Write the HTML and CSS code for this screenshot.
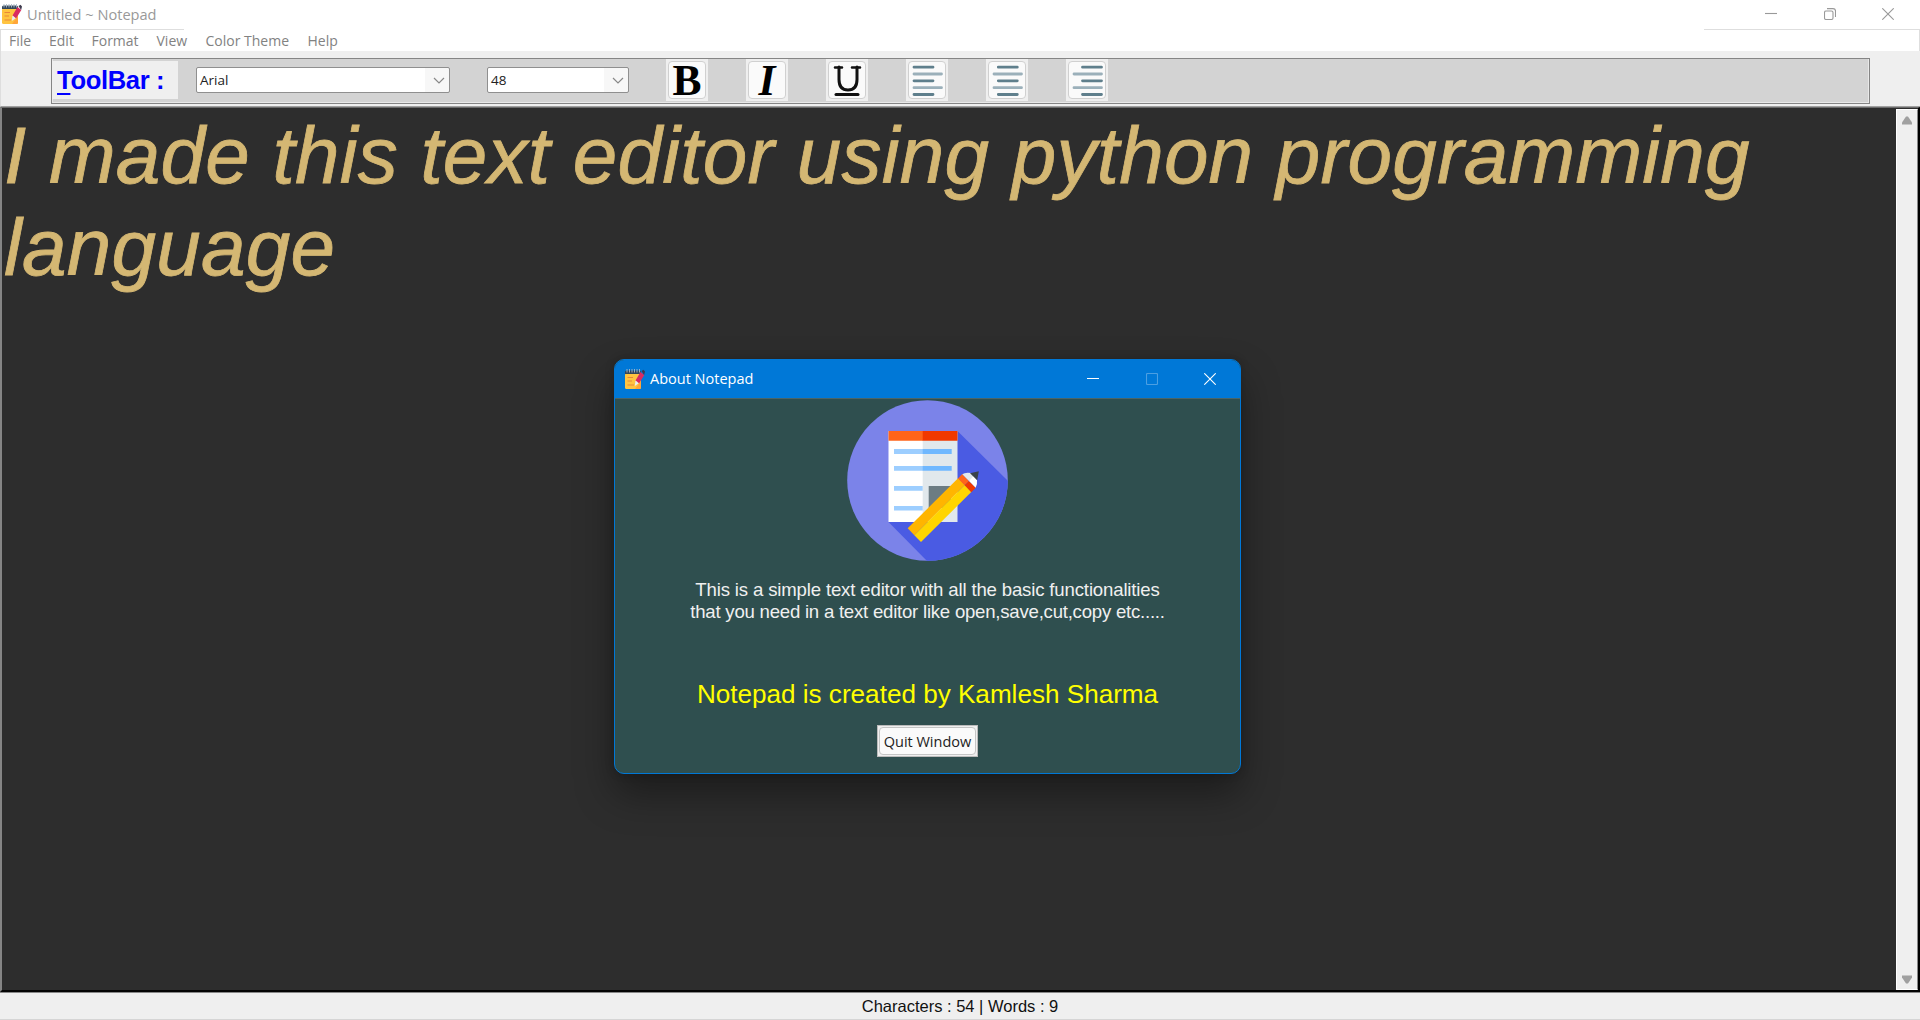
FILE: index.html
```html
<!DOCTYPE html>
<html lang="en">
<head>
<meta charset="utf-8">
<title>Untitled ~ Notepad</title>
<link rel="stylesheet" href="styles.css">
</head>
<body>
<svg class="defs" width="0" height="0">
  <symbol id="app" viewBox="0 0 20 20">
    <rect x="0" y="4" width="16" height="16" rx="1.6" fill="#ffc440"/>
    <path d="M10 20L16 12V18.500Q16 20 14.500 20Z" fill="#ffa53a"/>
    <path d="M0 5V3Q0 1.500 1.500 1.500H14.500Q16 1.500 16 3V5Z" fill="#33475b"/>
    <path d="M2 0V3.500M4.500 0V3.500M7 0V3.500M9.500 0V3.500M12 0V3.500M14.500 0V3.500" stroke="#aab9c6" stroke-width=".9"/>
    <path d="M2.500 8.500H8M2.500 12H7M2.500 16H9" stroke="#e8873a" stroke-width="1"/>
    <path d="M15.500 3L19.300 6L14 14.500L10.500 11.500Z" fill="#d92b62"/>
    <path d="M16.500 2L18.500 .8L20 2.500L19.100 6Z" fill="#3d3a4d"/>
    <path d="M10.500 11.500L13.800 14.300L9.800 17Z" fill="#e6edf4"/>
  </symbol>
</svg>
<div class="window">
  <header class="titlebar">
    <svg class="app-icon" width="20" height="20"><use href="#app"/></svg>
    <span class="title">Untitled ~ Notepad</span>
    <div class="controls">
      <svg width="12" height="12"><path d="M0 5.500H12"/></svg>
      <svg width="12" height="12"><rect x=".5" y="3" width="8.500" height="8.500" rx="1.500"/><path d="M3 .6H9Q11.500 .6 11.500 3V9"/></svg>
      <svg width="12" height="12"><path d="M.3 .3L11.700 11.700M11.700 .3L.3 11.700"/></svg>
    </div>
  </header>
  <nav class="menu">
    <span class="m-file">File</span><span class="m-edit">Edit</span><span class="m-format">Format</span><span class="m-view">View</span><span class="m-theme">Color Theme</span><span class="m-help">Help</span>
  </nav>
  <div class="toolrow">
    <div class="toolbar">
      <div class="label"><span class="mnemonic">T</span>oolBar :</div>
      <div class="combo font"><span>Arial</span><svg width="12" height="7"><path d="M1 1L6 6L11 1"/></svg></div>
      <div class="combo size"><span>48</span><svg width="12" height="7"><path d="M1 1L6 6L11 1"/></svg></div>
      <div class="tools">
        <button class="tool"><span class="bold">B</span></button>
        <button class="tool"><span class="italic">I</span></button>
        <button class="tool"><svg class="underline" width="38" height="38"><path d="M6 5.500H13M23 5.500H31" stroke-width="2.600"/><path d="M10 5V17.500Q10 28 19 28T28 17.500V5" stroke-width="3"/><path d="M7 32.500H29" stroke-width="3"/></svg></button>
        <button class="tool"><svg class="align" width="38" height="38"><path class="s" d="M5 5.200H24M5 18.800H24M5 32.500H24"/><path class="l" d="M5 12H32.500M5 25.700H32.500"/></svg></button>
        <button class="tool"><svg class="align" width="38" height="38"><path class="s" d="M9.300 5.200H28.300M9.300 18.800H28.300M9.300 32.500H28.300"/><path class="l" d="M5 12H32.500M5 25.700H32.500"/></svg></button>
        <button class="tool"><svg class="align" width="38" height="38"><path class="s" d="M13.500 5.200H32.500M13.500 18.800H32.500M13.500 32.500H32.500"/><path class="l" d="M5 12H32.500M5 25.700H32.500"/></svg></button>
      </div>
    </div>
  </div>
  <main class="editor">
    <div class="text">I made this text editor using python programming<br>language</div>
    <div class="scroll">
      <svg width="12" height="9"><path d="M5 .5H7L11 6.500V8.500H1V6.500Z"/></svg>
      <svg width="12" height="9"><path d="M1 .5H11V2.500L7 8.500H5L1 2.500Z"/></svg>
    </div>
  </main>
  <footer class="status">Characters : 54 | Words : 9</footer>
</div>
<section class="dialog">
  <header class="dialog-title">
    <svg class="app-icon" width="20" height="20"><use href="#app"/></svg>
    <span class="title">About Notepad</span>
    <div class="controls">
      <svg width="12" height="12"><path d="M0 5.500H12"/></svg>
      <svg class="disabled" width="12" height="12"><rect x=".5" y=".5" width="11" height="11" rx="1"/></svg>
      <svg width="12" height="12"><path d="M.3 .3L11.700 11.700M11.700 .3L.3 11.700"/></svg>
    </div>
  </header>
  <div class="dialog-body">
    <svg class="logo" width="161" height="161" viewBox="847 400 161 161">
      <defs><clipPath id="disc"><circle cx="927.500" cy="480.500" r="80.300"/></clipPath></defs>
      <circle cx="927.500" cy="480.500" r="80.300" fill="#7b83e9"/>
      <path clip-path="url(#disc)" d="M957.500 431L1012 485V565H931L888.500 522Z" fill="#4a5be3"/>
      <path fill="#fff" d="M888.500 431H923V522H888.500Z"/><path fill="#e1e8ec" d="M922.700 431H957.500V522H922.700Z"/>
      <path fill="#ff641a" d="M888.500 431H923V440.800H888.500Z"/><path fill="#f13800" d="M922.700 431H957.500V440.800H922.700Z"/>
      <path fill="#9dceff" d="M894 449H923V454H894ZM894 466H923V470.700H894ZM894 486H922.700V490.700H894ZM894 506H922.700V510.500H894Z"/>
      <path fill="#70b8ff" d="M922.700 449H951.700V454H922.700ZM922.700 466H951.700V470.700H922.700Z"/>
      <path fill="#6c7c83" d="M928.700 486H951V508H928.700Z"/>
      <path fill="#ffb500" d="M907.700 528.300L958.300 478L964.700 485L914.300 535.300Z"/>
      <path fill="#ffd500" d="M914.300 535.300L964.700 485L971.300 492L921 542Z"/>
      <path fill="#ff641a" d="M958 478.500L962.300 474L969 481L964.700 485.300Z"/>
      <path fill="#f13800" d="M964.700 485.300L969 481L975.700 487.700L971.300 492.200Z"/>
      <path fill="#e1e8ec" d="M962.300 474.300Q965 472 971 473L976 477L969 481Z"/><path fill="#fff" d="M969 481L974 475.500L977 480Q977.500 484 975.700 487.700Z"/>
      <path fill="#394249" d="M970 473.200L978.800 471.200L977.200 480.200Z"/>
    </svg>
    <p class="about"><span class="line-one">This is a simple text editor with all the basic functionalities</span><br><span class="line-two">that you need in a text editor like open,save,cut,copy etc.....</span></p>
    <p class="credit">Notepad is created by Kamlesh Sharma</p>
    <button class="quit"><span>Quit Window</span></button>
  </div>
</section>
</body>
</html>
```
FILE: styles.css
```css
* { box-sizing: border-box; }
body { margin: 0; width: 1920px; height: 1020px; overflow: hidden; font-family: "Open Sans", "Noto Sans", sans-serif; background: #fff; }
button { font: inherit; border: 0; padding: 0; }
.defs { position: absolute; }
.window { display: flex; flex-direction: column; height: 1020px; }
.titlebar {
  height: 30px; display: flex; align-items: center; padding: 0 26px 2px 2px; color: #999; font-size: 14.600px;
  background: linear-gradient(#dedede, #dedede) 0 29px / 184px 1px no-repeat, linear-gradient(#dedede, #dedede) 1704px 29px / 216px 1px no-repeat;
}
.title { margin-left: 5px; white-space: nowrap; }
.controls { margin-left: auto; display: flex; gap: 46.500px; }
.controls svg { fill: none; stroke: #999; stroke-width: 1.100; }
.menu { height: 21px; display: flex; padding-left: 8px; color: #828282; font-size: 14px; line-height: 22px; white-space: nowrap; border-left: 1px solid #dedede; border-right: 1px solid #dedede; }
.m-file { width: 40px; }
.m-edit { width: 42.500px; }
.m-format { width: 65px; }
.m-view { width: 49px; }
.m-theme { width: 102px; }
.toolrow { height: 56px; background: #efefef; padding: 7px 50px 2px; border-bottom: 1px solid #a0a0a0; border-left: 1px solid #dedede; }
.toolbar { height: 46px; background: #d3d3d3; border: 1px solid #858585; box-shadow: inset 1px 0 #e8e8e8, inset -1px -1px #e8e8e8; display: flex; align-items: center; padding: 0 1px 2px 0; }
.label { width: 126px; height: 38px; background: #efefef; color: #00f; font: bold 25.600px/38px "Liberation Sans", sans-serif; letter-spacing: -.35px; padding-left: 5px; white-space: nowrap; }
.mnemonic { text-decoration: underline; text-decoration-thickness: 2px; text-underline-offset: 4px; }
.combo { height: 26px; border: 1px solid #8f8f8f; border-radius: 2px; background: linear-gradient(90deg, #fff calc(100% - 24px), #f7f7f7 0); display: flex; align-items: center; justify-content: space-between; padding: 0 4px 0 3px; font-size: 13.500px; color: #222; }
.combo svg { fill: none; stroke: #888; stroke-width: 1.200; }
.font { width: 254px; margin-left: 18px; }
.size { width: 142px; margin-left: 37px; }
.tools { display: flex; gap: 38px; margin-left: 37px; }
.tool { width: 42px; height: 42px; background: #efefef; padding: 2px; display: flex; }
.tool > * { display: block; width: 38px; height: 38px; background: #fafafa; border: 1px solid #d0d0d0; border-radius: 4px; }
.bold, .italic { font: bold 43.500px/36px "Liberation Serif", serif; color: #000; text-align: center; }
.italic { font-style: italic; }
.underline { fill: none; stroke: #111; stroke-linecap: round; }
.align { fill: none; stroke-width: 2.800; stroke-linecap: round; }
.s { stroke: #5f7f8c; }
.l { stroke: #9bb0ba; }
.editor { flex: 1; background: #2d2d2d; border: 1px solid #000; border-width: 1px 2px 2px 2px; border-color: #6b6b6b #000 #050505 #858585; display: flex; justify-content: space-between; padding: 1px 0 0; }
.text { font: italic 80px/92px "Liberation Sans", sans-serif; letter-spacing: .24px; -webkit-text-stroke: .8px #d4b773; color: #d4b773; padding: 1px 0 0 2px; white-space: nowrap; }
.scroll { width: 22px; background: #efefef; border: 1px solid #fff; border-right-color: #888; display: flex; flex-direction: column; align-items: center; justify-content: space-between; padding: 6px 0 5px; }
.scroll svg { fill: #a0a0a0; }
.status { height: 28px; background: #efefef; border-top: 1px solid #888; border-bottom: 1px solid #d5d5d5; font: 16.500px/27px "Liberation Sans", sans-serif; color: #111; text-align: center; white-space: nowrap; }
.dialog { position: absolute; left: 614px; top: 359px; width: 627px; height: 415px; background: #2f4f4f; border: 1px solid #0078d7; border-radius: 10px; box-shadow: 0 20px 38px rgba(0,0,0,.38), 0 0 10px rgba(0,0,0,.18); overflow: hidden; }
.dialog-title { height: 38px; background: #0078d7; color: #fff; display: flex; align-items: center; padding: 0 24px 1px 10px; font-size: 14.500px; }
.dialog-title .controls svg { stroke: #fff; }
.dialog-title .controls .disabled { stroke: #4c9fe2; }
.dialog-body { display: flex; flex-direction: column; align-items: center; border-top: 1px solid #4a6568; padding-top: 1px; }
.logo { display: block; }
.about { margin: 18px 0 0; font: 18.600px/21.500px "Liberation Sans", sans-serif; color: #f0f0f0; text-align: center; white-space: nowrap; }
.line-one { letter-spacing: -.16px; }
.line-two { letter-spacing: -.23px; }
.credit { margin: 56px 0 0; font: 26.100px/32px "Liberation Sans", sans-serif; color: #ff0; white-space: nowrap; }
.quit { width: 101px; height: 32px; margin-top: 15px; padding: 1px; background: #efefef; border: 1px solid #bbb; color: #222; font-size: 14.500px; }
.quit span { display: block; height: 28px; line-height: 27px; background: #fafafa; border: 1px solid #c5c5c5; border-radius: 4px; white-space: nowrap; }
```
